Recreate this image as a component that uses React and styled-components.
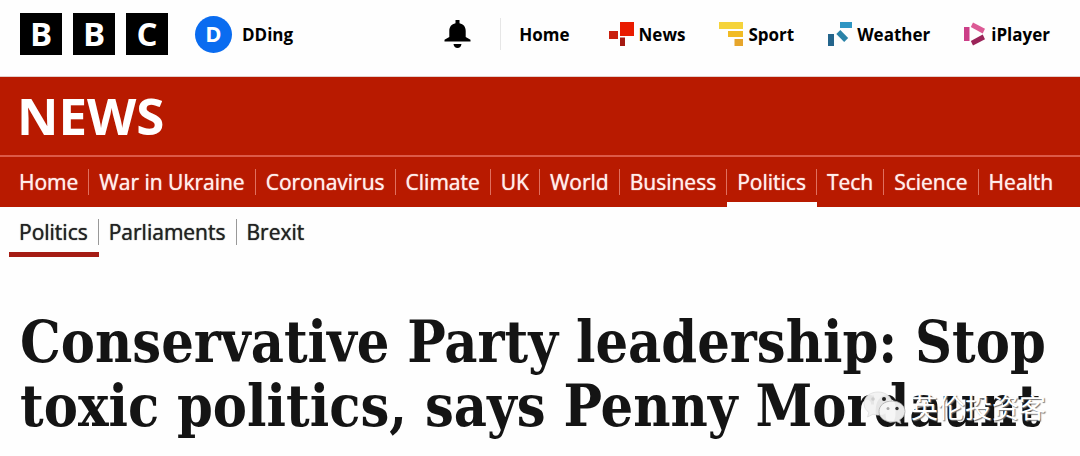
import React from "react";
import styled, { createGlobalStyle } from "styled-components";

const GlobalStyle = createGlobalStyle`
	* {
		box-sizing: border-box;
	}
	body {
		margin: 0;
		background-color: #fefefe;
		color: #141414;
		font-family: "Open Sans", "Noto Sans", sans-serif;
	}
	ul {
		margin: 0;
		padding: 0;
		list-style: none;
	}
	a {
		color: inherit;
		text-decoration: none;
	}
`;

const TopBar = styled.header`
	display: flex;
	align-items: center;
	height: 77px;
	padding: 0 30px 8px 20px;
	border-bottom: 1px solid #e3cfcc;
	color: #000;
	font-size: 17px;
	font-weight: 700;
`;

const Logo = styled.a`
	display: flex;
	gap: 11px;
`;

const LogoBlock = styled.span`
	display: flex;
	align-items: center;
	justify-content: center;
	width: 42px;
	height: 42px;
	background-color: #000;
	color: #fff;
	font-size: 33px;
	line-height: 42px;
`;

const Account = styled.a`
	display: flex;
	align-items: center;
	gap: 10px;
	margin-left: 27px;
`;

const Avatar = styled.span`
	display: flex;
	align-items: center;
	justify-content: center;
	width: 37px;
	height: 37px;
	padding-bottom: 2px;
	border-radius: 50%;
	background-color: #0a6cf0;
	color: #fff;
	font-size: 22px;
`;

const BellButton = styled.button`
	display: flex;
	margin-left: auto;
	padding: 0;
	border: 0;
	background: none;
	cursor: pointer;
`;

const ServiceList = styled.ul`
	display: flex;
	align-items: center;
	gap: 34px;
	height: 32px;
	margin-left: 29px;
	padding-left: 18px;
	border-left: 1px solid #e6e6e6;
	li:first-child {
		padding-right: 5px;
	}
`;

const ServiceLink = styled.a`
	display: flex;
	align-items: center;
	gap: 5px;
	svg {
		flex: none;
	}
`;

const Brand = styled.div`
	display: flex;
	align-items: center;
	height: 80px;
	padding: 0 17px 2px;
	border-bottom: 2px solid #dc5a48;
	background-color: #b81a00;
	color: #fff;
	font-size: 51px;
	font-weight: 700;
	line-height: 76px;
`;

const SectionNav = styled.nav`
	padding: 0 9px;
	background-color: ${(props) => (props.$red ? "#b81a00" : "transparent")};
	color: ${(props) => (props.$red ? "#ffeeeb" : "#222")};
	font-size: 21px;
	text-shadow: 0 0 1px currentColor;
	ul {
		display: flex;
	}
	li {
		height: 50px;
		padding-top: 12px;
		border-bottom: 5px solid transparent;
	}
	li.active {
		border-bottom-color: ${(props) => (props.$red ? "#fefefe" : "#a51c14")};
	}
	a {
		display: block;
		height: 26px;
		padding: 0 10px;
		border-right: 1px solid ${(props) => (props.$red ? "#e0705f" : "#999")};
		line-height: 26px;
		white-space: nowrap;
	}
	li:last-child a {
		border-right: 0;
	}
`;

const Article = styled.main`
	position: relative;
	padding: 53px 20px 18px;
`;

const Headline = styled.h1`
	margin: 0;
	font-family: "DejaVu Serif Condensed", "DejaVu Serif", serif;
	font-size: 57px;
	font-weight: 700;
	line-height: 64px;
`;

const Watermark = styled.div`
	position: absolute;
	right: 34px;
	bottom: 28px;
	display: flex;
	align-items: center;
	gap: 4px;
	color: #fff;
	font-family: "Noto Sans", "Noto Sans CJK SC", sans-serif;
	font-size: 27px;
	line-height: 40px;
	text-shadow: 1px 1px 1px #777;
`;

const BellIcon = () => (
	<svg width="27" height="30" viewBox="0 0 27 30" aria-hidden="true">
		<path d="M11.5 1h4v3.2c4 .8 6.2 3.600 6.200 7.800v6l4.800 2.800v1.700H.5v-1.700L5.300 18v-6c0-4.200 2.200-7 6.200-7.800z" />
		<path d="M9.500 25h8c-.4 2.600-1.800 4-4 4s-3.600-1.400-4-4z" />
	</svg>
);

const NewsIcon = () => (
	<svg width="25" height="24" viewBox="0 0 25 24" aria-hidden="true">
		<path fill="#e91b00" d="M11 0h14v14H11z" />
		<path fill="#c9200f" d="M0 9h9v8H0z" />
		<path fill="#a51a12" d="M11 15.500h5V24h-5z" />
	</svg>
);

const SportIcon = () => (
	<svg width="24" height="24" viewBox="0 0 24 24" aria-hidden="true">
		<path fill="#f5d33b" d="M0 0h24v7H0z" />
		<path fill="#f1bb24" d="M9 9h15v6H9z" />
		<path fill="#e6a52b" d="M15.500 17H24v7h-8.500z" />
	</svg>
);

const WeatherIcon = () => (
	<svg width="24" height="24" viewBox="0 0 24 24" aria-hidden="true">
		<path fill="#2f96c3" d="M12 0h12v6H12z" />
		<path fill="#2a83a8" d="M12.300 8l7.900 7.900-4 4L8.300 12z" />
		<path fill="#24658c" d="M0 12h6v12H0z" />
	</svg>
);

const PlayerIcon = () => (
	<svg width="22" height="24" viewBox="0 0 22 24" aria-hidden="true">
		<path fill="#cc3e88" d="M0 5h5.500v14H0z" />
		<path fill="#dc5a95" d="M9 .5l12 6.300-2.300 4.700L6.800 5z" />
		<path fill="#9b2459" d="M18.700 12.500l2.300 4.700-12 6.300L6.800 19z" />
	</svg>
);

const WechatIcon = () => (
	<svg width="44" height="34" viewBox="0 0 44 34" aria-hidden="true">
		<path
			fill="#f2f2f2"
			fillOpacity=".94"
			stroke="#ddd"
			strokeWidth=".8"
			d="M15 1C7 1 1 6 1 12.500c0 3.700 2 6.800 5 9L4.500 26l5.500-2.800c1.600.5 3.300.8 5 .8 8 0 14-5 14-11.500S23 1 15 1z"
		/>
		<circle cx="10" cy="8" r="1.800" fill="#ccc" />
		<circle cx="21" cy="8" r="2" fill="#222" />
		<path
			fill="#f5f5f5"
			fillOpacity=".94"
			stroke="#aaa"
			strokeWidth=".8"
			d="M29 10c-7.500 0-13 4.500-13 10.500S21.500 31 29 31c1.500 0 3-.2 4.300-.6l4.700 2.400-1.300-4c3.200-2 5.300-4.900 5.300-8.300C42 14.500 36.500 10 29 10z"
		/>
		<circle cx="25" cy="17.500" r="1.500" fill="#aaa" />
		<circle cx="34" cy="17.500" r="1.700" fill="#333" />
	</svg>
);

const services = [
	{ text: "Home" },
	{ text: "News", icon: <NewsIcon /> },
	{ text: "Sport", icon: <SportIcon /> },
	{ text: "Weather", icon: <WeatherIcon /> },
	{ text: "iPlayer", icon: <PlayerIcon /> },
];

const sections = [
	"Home",
	"War in Ukraine",
	"Coronavirus",
	"Climate",
	"UK",
	"World",
	"Business",
	"Politics",
	"Tech",
	"Science",
	"Health",
];

const subSections = ["Politics", "Parliaments", "Brexit"];

const NavItems = ({ items }) => (
	<ul>
		{items.map((item) => (
			<li key={item} className={item === "Politics" ? "active" : undefined}>
				<a href="#">{item}</a>
			</li>
		))}
	</ul>
);

export default function App() {
	return (
		<>
			<GlobalStyle />
			<TopBar>
				<Logo href="#">
					<LogoBlock>B</LogoBlock>
					<LogoBlock>B</LogoBlock>
					<LogoBlock>C</LogoBlock>
				</Logo>
				<Account href="#">
					<Avatar>D</Avatar>
					DDing
				</Account>
				<BellButton aria-label="Notifications">
					<BellIcon />
				</BellButton>
				<ServiceList>
					{services.map((s) => (
						<li key={s.text}>
							<ServiceLink href="#">
								{s.icon}
								{s.text}
							</ServiceLink>
						</li>
					))}
				</ServiceList>
			</TopBar>
			<Brand>NEWS</Brand>
			<SectionNav $red aria-label="News">
				<NavItems items={sections} />
			</SectionNav>
			<SectionNav aria-label="Politics">
				<NavItems items={subSections} />
			</SectionNav>
			<Article>
				<Headline>
					Conservative Party leadership: Stop toxic politics, says Penny Mordaunt
				</Headline>
				<Watermark>
					<WechatIcon />
					英伦投资客
				</Watermark>
			</Article>
		</>
	);
}
